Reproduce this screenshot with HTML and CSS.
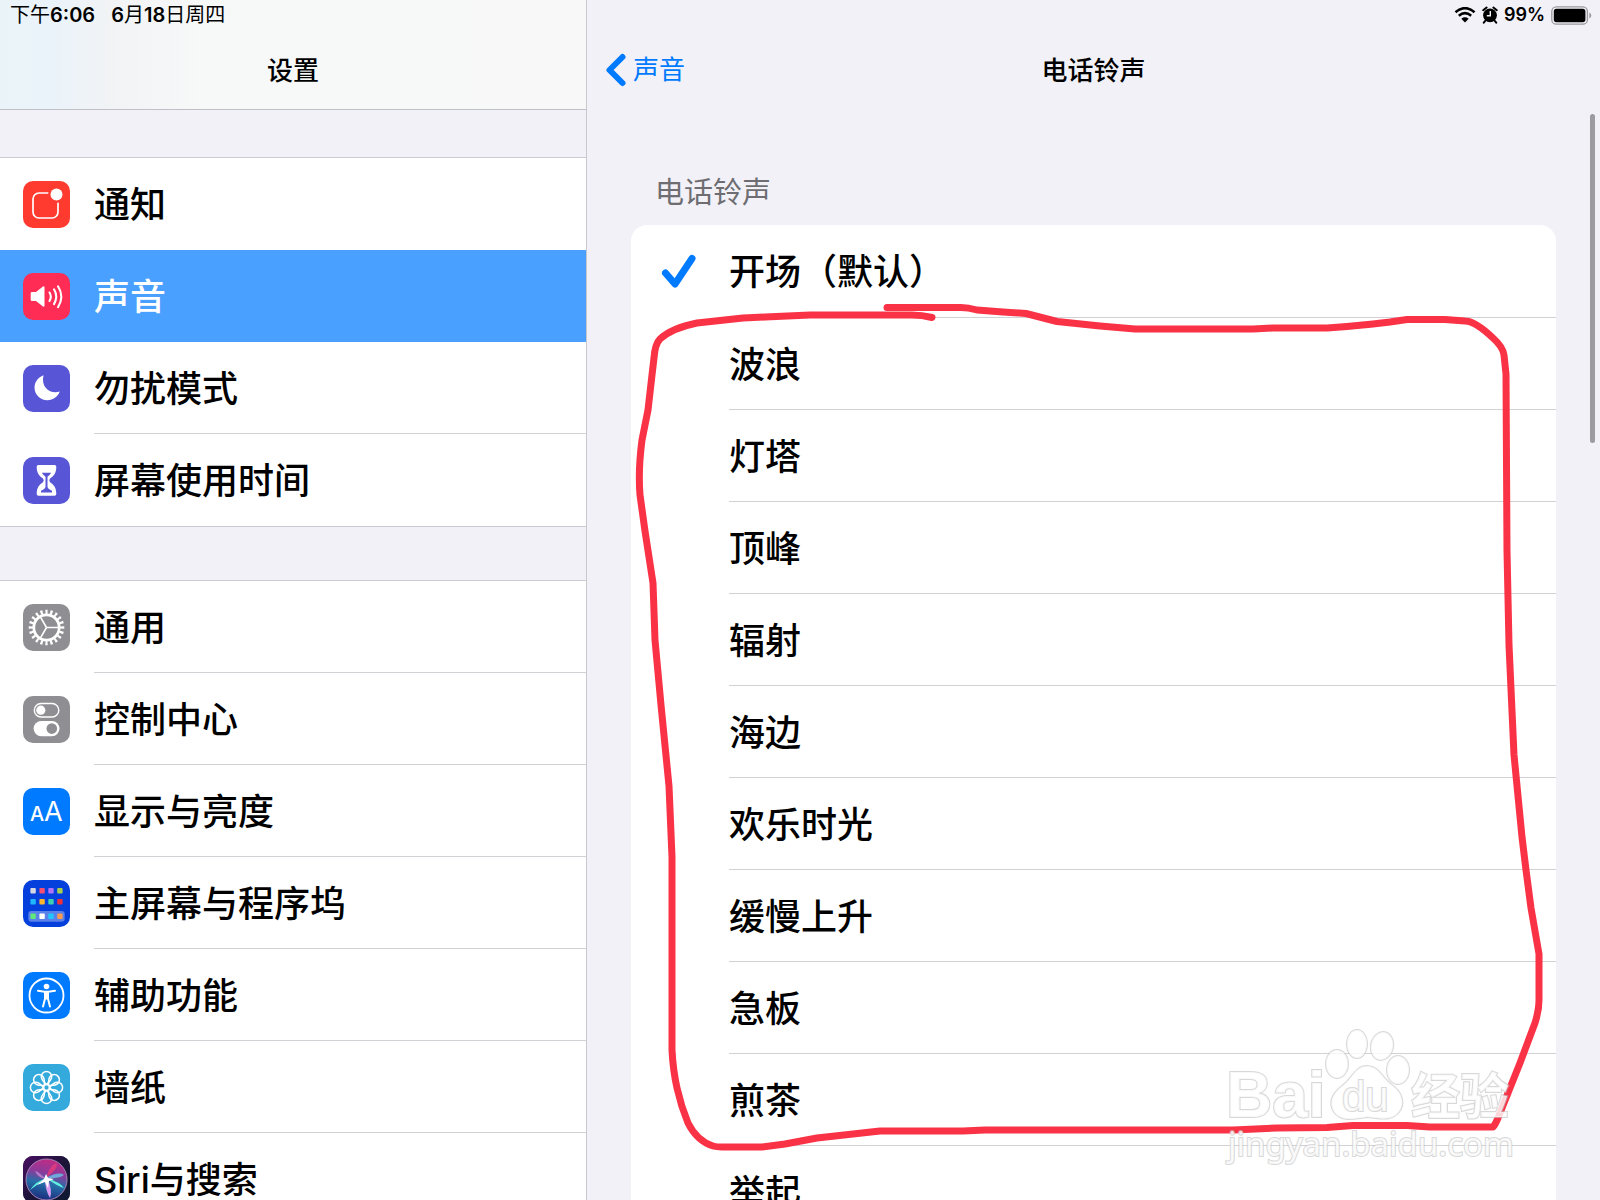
FILE: index.html
```html
<!DOCTYPE html>
<html lang="zh-CN">
<head>
    <meta charset="UTF-8">
    <meta name="viewport" content="width=device-width, initial-scale=1.0">
    <title>电话铃声</title>
    <link rel="stylesheet" href="styles.css">
</head>
<body>
    <aside class="sidebar">
        <header class="sidebar-header">
            <div class="status">
                <span>下午<b>6:06</b></span>
                <span><b>6</b>月<b>18</b>日周四</span>
            </div>
            <h1 class="title">设置</h1>
        </header>
        <nav>
            <div class="group">
                <a class="item" href="#notifications">
                    <svg class="icon" viewBox="0 0 47 47" style="background: #ff3b30">
                        <rect x="10" y="12" width="25" height="25" rx="6" fill="none" stroke="#fff" stroke-width="1.7"/>
                        <circle cx="33.5" cy="13.5" r="8.5" fill="#ff3b30"/>
                        <circle cx="33.5" cy="13.5" r="6" fill="#fff"/>
                    </svg>
                    <span class="label">通知</span>
                </a>
                <a class="item selected" href="#sounds">
                    <svg class="icon" viewBox="0 0 47 47" style="background: #ff2d55">
                        <path d="M9 19h4l7-5.5q1.5-.8 1.5 1v18q0 1.8-1.5 1l-7-5.5H9q-1.300 0-1.300-1.300v-6.400Q7.700 19 9 19z" fill="#fff"/>
                        <path d="M26.500 19.500q2.600 4.200 0 8.500M31 16.300q4.400 7.200 0 14.800M35 13.300q6.600 10.300 0 20.900" fill="none" stroke="#fff" stroke-width="2.100" stroke-linecap="round"/>
                    </svg>
                    <span class="label">声音</span>
                </a>
                <a class="item" href="#dnd">
                    <svg class="icon" viewBox="0 0 47 47" style="background: #5856d6">
                        <path d="M20.500 10.200C14.500 12.500 11.500 17.500 11.500 22.500 11.500 29.500 17 35.200 24.500 35.200 30 35.200 35 32 36.700 26.600 28 29.500 17.500 23 20.500 10.200z" fill="#fff"/>
                    </svg>
                    <span class="label">勿扰模式</span>
                </a>
                <a class="item" href="#screen-time">
                    <svg class="icon" viewBox="0 0 47 47" style="background: #5856d6">
                        <path d="M15.500 8h16q1.800 0 1.800 1.800C33.300 16 31 19 27 21.500q-1.500 1.800 0 3.700C31 27.700 33.300 31 33.300 37q0 1.700-1.800 1.700h-16q-1.800 0-1.800-1.700C13.700 31 16 27.700 20 25.200q1.500-1.900 0-3.700C16 19 13.700 16 13.700 9.800 13.700 8 15.500 8 15.500 8z" fill="#fff"/>
                        <path d="M18.800 15.700h9.400q-1.700 2.700-3.700 4v9.800q0 2.300 4.500 4.300v1.700H18v-1.700q4.500-2 4.500-4.300v-9.800q-2-1.300-3.700-4z" fill="#5856d6"/>
                    </svg>
                    <span class="label">屏幕使用时间</span>
                </a>
            </div>
            <div class="group">
                <a class="item" href="#general">
                    <svg class="icon" viewBox="0 0 47 47" style="background: #8e8e93">
                        <g fill="none" stroke="#fff">
                            <circle cx="23.500" cy="23.500" r="12.700" stroke-width="2.800"/>
                            <circle cx="23.500" cy="23.500" r="15.700" stroke-width="4.200" pathLength="80" stroke-dasharray="1.800 2.200" stroke-dashoffset=".9"/>
                            <path d="M23.500 23.500H36M23.500 23.500l-6.300-10.900M23.500 23.500l-6.300 10.900" stroke-width="1.600"/>
                        </g>
                    </svg>
                    <span class="label">通用</span>
                </a>
                <a class="item" href="#control-center">
                    <svg class="icon" viewBox="0 0 47 47" style="background: #8e8e93">
                        <rect x="11.300" y="7.500" width="24.500" height="13.500" rx="6.750" fill="none" stroke="#fff" stroke-width="1.400"/>
                        <circle cx="17.800" cy="14.200" r="4.600" fill="#fff"/>
                        <rect x="10.600" y="25" width="25.900" height="15.200" rx="7.600" fill="#fff"/>
                        <circle cx="28.800" cy="32.600" r="5.300" fill="#8e8e93"/>
                    </svg>
                    <span class="label">控制中心</span>
                </a>
                <a class="item" href="#display">
                    <svg class="icon" viewBox="0 0 47 47" style="background: #007aff">
                        <text x="7" y="33" font-size="20" font-weight="500" fill="#fff">A</text>
                        <text x="21" y="33" font-size="27" fill="#fff">A</text>
                    </svg>
                    <span class="label">显示与亮度</span>
                </a>
                <a class="item" href="#home-screen">
                    <svg class="icon" viewBox="0 0 47 47" style="background: #0640dc">
                        <rect x="5.300" y="31" width="36.400" height="10.700" rx="3" fill="#5a80ea"/>
                        <rect x="7.400" y="8" width="5.400" height="5.400" rx="1" fill="#d6d9e4"/>
                        <rect x="16.400" y="8" width="5.400" height="5.400" rx="1" fill="#f74e71"/>
                        <rect x="25.300" y="8" width="5.400" height="5.400" rx="1" fill="#b272f8"/>
                        <rect x="34.200" y="8" width="5.400" height="5.400" rx="1" fill="#a8d04c"/>
                        <rect x="7.400" y="19" width="5.400" height="5.400" rx="1" fill="#20b6fa"/>
                        <rect x="16.400" y="19" width="5.400" height="5.400" rx="1" fill="#fbb62d"/>
                        <rect x="25.300" y="19" width="5.400" height="5.400" rx="1" fill="#3fd0b0"/>
                        <rect x="34.200" y="19" width="5.400" height="5.400" rx="1" fill="#ee3138"/>
                        <rect x="7.400" y="33.600" width="5.400" height="5.400" rx="1" fill="#5fe87c"/>
                        <rect x="16.400" y="33.600" width="5.400" height="5.400" rx="1" fill="#fff"/>
                        <rect x="25.300" y="33.600" width="5.400" height="5.400" rx="1" fill="#22c6fa"/>
                        <rect x="34.200" y="33.600" width="5.400" height="5.400" rx="1" fill="#f99a50"/>
                    </svg>
                    <span class="label">主屏幕与程序坞</span>
                </a>
                <a class="item" href="#accessibility">
                    <svg class="icon" viewBox="0 0 47 47" style="background: #007aff">
                        <circle cx="23.500" cy="23.500" r="17" fill="none" stroke="#fff" stroke-width="1.800"/>
                        <circle cx="23.500" cy="14.500" r="2.800" fill="#fff"/>
                        <path d="M15 18.800l6.500.9h4l6.500-.9M20 34.500l2.200-8.500v-5.500M27 34.500l-2.200-8.500v-5.500" fill="none" stroke="#fff" stroke-width="2" stroke-linecap="round"/>
                        <path d="M21 19.500h5v8h-5z" fill="#fff"/>
                    </svg>
                    <span class="label">辅助功能</span>
                </a>
                <a class="item" href="#wallpaper">
                    <svg class="icon" viewBox="0 0 47 47" style="background: #34aadc">
                        <defs>
                            <path id="petal" d="M23.500 20.500C20 17.500 18.300 14.800 18.300 12.600a5.200 5.200 0 0 1 10.400 0C28.700 14.800 27 17.500 23.500 20.500z"/>
                        </defs>
                        <g fill="none" stroke="#fff" stroke-width="1.500">
                            <use href="#petal"/>
                            <use href="#petal" transform="rotate(45 23.500 23.500)"/>
                            <use href="#petal" transform="rotate(90 23.500 23.500)"/>
                            <use href="#petal" transform="rotate(135 23.500 23.500)"/>
                            <use href="#petal" transform="rotate(180 23.500 23.500)"/>
                            <use href="#petal" transform="rotate(225 23.500 23.500)"/>
                            <use href="#petal" transform="rotate(270 23.500 23.500)"/>
                            <use href="#petal" transform="rotate(315 23.500 23.500)"/>
                            <circle cx="23.500" cy="23.500" r="3"/>
                        </g>
                    </svg>
                    <span class="label">墙纸</span>
                </a>
                <a class="item" href="#siri">
                    <svg class="icon" viewBox="0 0 47 47" style="background: #1d1538">
                        <defs>
                            <linearGradient id="siri-bg" x1="0" y1="0" x2="1" y2="1">
                                <stop offset="0" stop-color="#4a0f63"/>
                                <stop offset=".5" stop-color="#1c1438"/>
                                <stop offset="1" stop-color="#0d1a30"/>
                            </linearGradient>
                            <linearGradient id="siri-orb" x1=".6" y1="0" x2=".4" y2="1">
                                <stop offset="0" stop-color="#c22a83"/>
                                <stop offset=".35" stop-color="#8a3b9c"/>
                                <stop offset=".6" stop-color="#256fa8"/>
                                <stop offset="1" stop-color="#1b2b7c"/>
                            </linearGradient>
                        </defs>
                        <rect width="47" height="47" fill="url(#siri-bg)"/>
                        <circle cx="23.500" cy="23.500" r="20.500" fill="url(#siri-orb)" stroke="#a884b8" stroke-width="1"/>
                        <path d="M23 23Q10 11 13 17q3 5 10 6z" fill="#b879c9"/>
                        <path d="M23 22Q27 9 33 7q4 4-10 15z" fill="#d83a80"/>
                        <path d="M23 22q13-7 18-3-6 4-18 3z" fill="#6fa8d8"/>
                        <path d="M24 22Q13 25 7 34q8-6 17-12zM23 22q14 4 18 10-7-2-18-10z" fill="#5ff0e0"/>
                        <path d="M22 22q0 12 5 20 3-8-3-20z" fill="#d99cf0"/>
                        <path d="M23 18l2 4 6 1-5 2-1 7-3-6-8 3 7-6z" fill="#fff"/>
                    </svg>
                    <span class="label">Siri与搜索</span>
                </a>
            </div>
        </nav>
    </aside>

    <main class="detail">
        <header class="detail-header">
            <div class="status status-right">
                <svg width="22" height="16" viewBox="0 0 22 16">
                    <path d="M1.500 5.300Q11-3 20.500 5.300M4.800 8.700q6.200-5 12.400 0" fill="none" stroke="#000" stroke-width="2.600"/>
                    <path d="M11 15.500L7.300 11.700q3.700-2.700 7.400 0z"/>
                </svg>
                <svg width="16" height="18" viewBox="0 0 16 18">
                    <circle cx="8" cy="9.300" r="6.900"/>
                    <path d="M1.200 4.200L4.600 1.500M14.800 4.200L11.400 1.500M3.500 14.500L1.800 16.700M12.500 14.500l1.700 2.200" stroke="#000" stroke-width="2" stroke-linecap="round"/>
                    <path d="M8.300 5v4.800H4.800" fill="none" stroke="#f2f1f7" stroke-width="1.400"/>
                </svg>
                <b>99%</b>
                <svg width="41" height="19" viewBox="0 0 41 19">
                    <rect x=".8" y=".8" width="35.600" height="17.400" rx="4.500" fill="none" stroke="#99999d" stroke-width="1.300"/>
                    <rect x="2.800" y="2.800" width="31.600" height="13.400" rx="2.600"/>
                    <path d="M38.300 6.500q2 1 2 3t-2 3z" fill="#99999d"/>
                </svg>
            </div>
            <a class="back" href="#sounds">
                <svg width="22" height="36" viewBox="0 0 22 36">
                    <path d="M17.500 5L4.500 18l13 13" fill="none" stroke="#007aff" stroke-width="6" stroke-linecap="round" stroke-linejoin="round"/>
                </svg>
                <span>声音</span>
            </a>
            <h2 class="title">电话铃声</h2>
        </header>

        <form class="tones">
            <h3 class="section-title">电话铃声</h3>
            <div class="card">
                <label class="tone">
                    <input type="radio" name="tone" checked>
                    <svg class="check" width="36" height="36" viewBox="0 0 36 36">
                        <path d="M4.500 20l9.500 11L31 5.500" fill="none" stroke="#007aff" stroke-width="7" stroke-linecap="round" stroke-linejoin="round"/>
                    </svg>
                    <span class="tone-name">开场（默认）</span>
                </label>
                <label class="tone"><input type="radio" name="tone"><span class="tone-name">波浪</span></label>
                <label class="tone"><input type="radio" name="tone"><span class="tone-name">灯塔</span></label>
                <label class="tone"><input type="radio" name="tone"><span class="tone-name">顶峰</span></label>
                <label class="tone"><input type="radio" name="tone"><span class="tone-name">辐射</span></label>
                <label class="tone"><input type="radio" name="tone"><span class="tone-name">海边</span></label>
                <label class="tone"><input type="radio" name="tone"><span class="tone-name">欢乐时光</span></label>
                <label class="tone"><input type="radio" name="tone"><span class="tone-name">缓慢上升</span></label>
                <label class="tone"><input type="radio" name="tone"><span class="tone-name">急板</span></label>
                <label class="tone"><input type="radio" name="tone"><span class="tone-name">煎茶</span></label>
                <label class="tone"><input type="radio" name="tone"><span class="tone-name">举起</span></label>

                <!-- red pen mark and watermark over the list -->
                <svg class="overlay" viewBox="631 225 925 975">
                    <path class="pen" d="M932 317.500Q922 315 912 315H810L765 317 743 318 697 323Q672 328 660 339 655 344 654 358L652 375 648 410 642 440Q638 470 640 495L645 531 653 583 655 640 661 705 669 786 672 857V1050Q673 1070 677 1088 681 1106 688 1123 697 1141 713 1146 716 1147 722 1147H762L785 1144 817 1138 853 1134 880 1131H963L985 1130H1233L1277 1128 1327 1127.500 1353 1125.500H1407L1430 1127H1493Q1495 1125 1498 1118L1520 1063 1535 1023Q1539 1010 1539 1000V954L1531 908 1526 870 1522 837 1514 755 1509 645 1507 551 1506 374 1504 355Q1503 347 1493 338 1475 321 1465 321L1445 319.500H1407L1390 322 1373 324 1347 326.500 1327 328H1273L1253 329H1135L1100 326 1057 321.500 1026 313.500 1003 312 977 310Q968 307.500 961 307.500H887"/>
                    <g class="watermark">
                        <ellipse cx="1337" cy="1064" rx="11" ry="14"/>
                        <ellipse cx="1357" cy="1044" rx="10" ry="14"/>
                        <ellipse cx="1382" cy="1046" rx="11" ry="14" transform="rotate(12 1382 1046)"/>
                        <ellipse cx="1398" cy="1070" rx="11" ry="14"/>
                        <path d="M1367 1066C1379 1066 1382 1078 1392 1085 1403 1093 1405 1104 1399 1112 1391 1122 1379 1118 1367 1117 1355 1119 1341 1122 1334 1112 1328 1102 1333 1093 1342 1086 1353 1078 1355 1066 1367 1066z"/>
                        <text x="1226" y="1117" font-size="64" font-weight="bold">Bai</text>
                        <text x="1342" y="1111" font-size="42">du</text>
                        <text class="watermark-cn" x="1411" y="1114" font-size="49" font-weight="bold">经验</text>
                        <text class="watermark-url" x="1228" y="1156" font-size="33">jingyan.baidu.com</text>
                    </g>
                </svg>
            </div>
        </form>
        <div class="scrollbar"></div>
    </main>
</body>
</html>
```

FILE: styles.css
```css
body, html {
    margin: 0;
    padding: 0;
    height: 100%;
    overflow: hidden;
    font-family: Inter, 'Noto Sans CJK SC', sans-serif;
    color: #000;
    background: #f2f1f7;
}

body {
    display: flex;
}

a {
    color: inherit;
    text-decoration: none;
}

/* Status bar */
.status {
    display: flex;
    align-items: center;
    gap: 16px;
    height: 30px;
    padding-left: 10px;
    font-size: 20px;
    line-height: 32px;
}

.status b {
    font-weight: 600;
}

.status-right {
    justify-content: flex-end;
    gap: 6px;
    padding: 0 8px 0 0;
    font-size: 18px;
}

.title {
    margin: 0;
    font-size: 26px;
    line-height: 82px;
    font-weight: 500;
    text-align: center;
}

/* Left column */
.sidebar {
    box-sizing: border-box;
    flex: 0 0 587px;
    overflow: hidden;
    border-right: 1px solid #c9c8ce;
}

.sidebar-header {
    height: 109px;
    border-bottom: 1px solid #bfc1c6;
    background: linear-gradient(90deg, #eaf4f8 0, #eaf3fa 50px, #f1f3f5 110px, #f7f8f8 200px, #f8f8f8 100%);
}

.group {
    margin-top: 47px;
    border-top: 1px solid #cccbd1;
    border-bottom: 1px solid #cccbd1;
    background: #fff;
}

.group + .group {
    margin-top: 53px;
}

.item {
    display: flex;
    align-items: center;
    height: 92px;
    padding-left: 23px;
}

.icon {
    flex: none;
    width: 47px;
    height: 47px;
    margin-right: 24px;
    border-radius: 10px;
}

.label {
    box-sizing: border-box;
    flex: 1;
    height: 92px;
    font-size: 36px;
    font-weight: 500;
    line-height: 94px;
    border-bottom: 1px solid #d1d1d6;
}

.item:last-child .label,
.item.selected .label,
.item:has(+ .selected) .label {
    border-bottom: none;
}

.item.selected {
    color: #fff;
    background: #4aa0ff;
}

/* Right column */
.detail {
    position: relative;
    flex: 1;
    overflow: hidden;
}

.detail-header {
    position: relative;
    height: 110px;
}

.back {
    position: absolute;
    top: 30px;
    left: 18px;
    display: flex;
    align-items: center;
    gap: 6px;
    height: 80px;
    font-size: 26px;
    line-height: 80px;
    color: #007aff;
}

.tones {
    padding: 0 44px;
}

.section-title {
    margin: 0;
    padding: 51px 0 0 24px;
    font-size: 29px;
    font-weight: 400;
    line-height: 64px;
    color: #6d6d72;
}

.card {
    position: relative;
    border-radius: 16px;
    background: #fff;
}

.tone {
    position: relative;
    display: block;
    height: 92px;
    padding-left: 98px;
}

.tone input {
    position: absolute;
    opacity: 0;
}

.check {
    position: absolute;
    top: 28px;
    left: 30px;
}

.tone-name {
    display: block;
    font-size: 36px;
    font-weight: 500;
    line-height: 94px;
}

.tone + .tone .tone-name {
    box-sizing: border-box;
    height: 92px;
    border-top: 1px solid #d1d1d6;
}

.overlay {
    position: absolute;
    top: 0;
    left: 0;
    width: 100%;
    overflow: visible;
    pointer-events: none;
}

.pen {
    fill: none;
    stroke: #fa3246;
    stroke-width: 7;
    stroke-linecap: round;
    stroke-linejoin: round;
}

.watermark {
    fill: rgba(255, 255, 255, 0.8);
    stroke: rgba(195, 195, 195, 0.65);
    stroke-width: 2;
    paint-order: stroke;
    font-family: 'Liberation Sans', sans-serif;
}

.watermark-cn {
    font-family: 'Noto Sans CJK SC', sans-serif;
}

.watermark-url {
    font-family: 'Noto Sans', sans-serif;
}

.scrollbar {
    position: absolute;
    top: 114px;
    right: 5px;
    width: 5px;
    height: 329px;
    border-radius: 3px;
    background: #9b9ba0;
}
```
